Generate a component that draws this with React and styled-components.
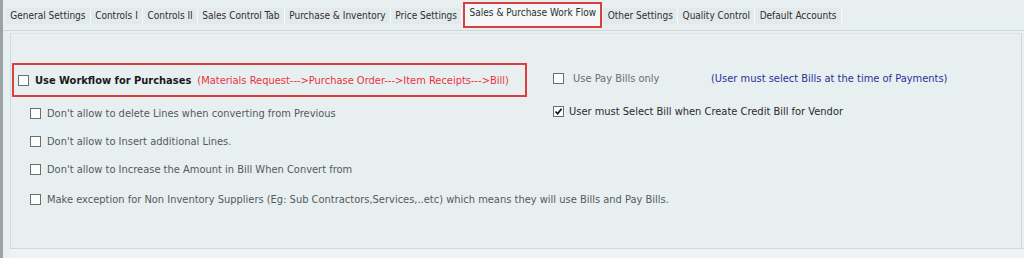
import React from 'react';
import styled, {createGlobalStyle} from 'styled-components';

const tabs= [
    "General Settings", "Controls I", "Controls II", "Sales Control Tab",
    "Purchase & Inventory", "Price Settings", "Sales & Purchase Work Flow",
    "Other Settings", "Quality Control", "Default Accounts"
];

const subOptions= [
    "Don't allow to delete Lines when converting from Previous",
    "Don't allow to Insert additional Lines.",
    "Don't allow to Increase the Amount in Bill When Convert from",
];

const Box= ({checked})=> (
    <CheckBox>
        {checked && (
            <svg width="9" height="9" viewBox="0 0 9 9">
                <path d="M1.5 4.5 L3.6 6.8 L7.6 1.8" fill="none" stroke="#111" strokeWidth="1.7"/>
            </svg>
        )}
    </CheckBox>
);

const App= ()=> {
    return (
        <Window>
            <GlobalStyle/>
            <TabBar>
                {tabs.map((t, i)=> (
                    <Tab key= {t} active= {i === 6}>{t}</Tab>
                ))}
            </TabBar>
            <Panel>
                <Columns>
                    <LeftColumn>
                        <HighlightBox>
                            <Box/>
                            <BoldLabel>Use Workflow for Purchases</BoldLabel>
                            <FlowNote>(Materials Request---&gt;Purchase Order---&gt;Item Receipts---&gt;Bill)</FlowNote>
                        </HighlightBox>
                        {subOptions.map((s)=> (
                            <SubOption key= {s}>
                                <Box/>
                                <Label>{s}</Label>
                            </SubOption>
                        ))}
                        <SubOption wide>
                            <Box/>
                            <Label>Make exception for Non Inventory Suppliers (Eg: Sub Contractors,Services,..etc) which means they will use Bills and Pay Bills.</Label>
                        </SubOption>
                    </LeftColumn>
                    <RightColumn>
                        <PayRow>
                            <Box/>
                            <PayLabel>Use Pay Bills only</PayLabel>
                            <BlueNote>(User must select Bills at the time of Payments)</BlueNote>
                        </PayRow>
                        <CreditRow>
                            <Box checked/>
                            <DarkLabel>User must Select Bill when Create Credit Bill for Vendor</DarkLabel>
                        </CreditRow>
                    </RightColumn>
                </Columns>
            </Panel>
            <Footer/>
        </Window>
    )
}

const GlobalStyle= createGlobalStyle`
    html, body {
        margin: 0;
        padding: 0;
        background-color: #e8eff0;
        font-family: "DejaVu Sans Condensed", "DejaVu Sans", sans-serif;
        font-size: 11px;
    }
`;
const Window= styled.div`
    width: 1024px;
    height: 258px;
    box-sizing: border-box;
    border-left: 3px solid #9ca3a5;
    background-color: #e8eff0;
    display: flex;
    flex-direction: column;
    overflow: hidden;
`;
const TabBar= styled.div`
    height: 31px;
    box-sizing: border-box;
    padding-left: 3px;
    display: flex;
    flex-direction: row;
    align-items: center;
    border-bottom: 1px solid #cdd6d8;
`;
const Tab= styled.div`
    height: ${p=> p.active? "26px": "16px"};
    box-sizing: border-box;
    padding: 0 4.3px;
    display: flex;
    align-items: center;
    margin-top: ${p=> p.active? "0": "1px"};
    margin-left: ${p=> p.active? "1px": "0"};
    margin-right: ${p=> p.active? "1px": "0"};
    white-space: nowrap;
    color: #2e2e2e;
    font-size: 10px;
    background-color: ${p=> p.active? "#f3f7f8": "#e3eaeb"};
    border: ${p=> p.active? "2px solid #d9403f": "none"};
    border-right: ${p=> p.active? "2px solid #d9403f": "1px solid #f6fafa"};
    padding-bottom: ${p=> p.active? "5px": "0"};
`;
const Panel= styled.div`
    flex: 1;
    margin: 2px 2px 0 7px;
    border-left: 1px solid #d2dadc;
    border-right: 1px solid #cfd7d9;
    border-top: 1px solid #dde4e5;
`;
const Columns= styled.div`
    display: flex;
    flex-direction: row;
`;
const LeftColumn= styled.div`
    width: 541px;
    padding-left: 1px;
    padding-top: 29px;
    display: flex;
    flex-direction: column;
`;
const RightColumn= styled.div`
    padding-top: 37px;
    display: flex;
    flex-direction: column;
`;
const HighlightBox= styled.div`
    width: 515px;
    height: 34px;
    box-sizing: border-box;
    border: 2px solid #dd3f3f;
    display: flex;
    align-items: center;
    padding-left: 4px;
    margin-bottom: 2px;
    white-space: nowrap;
`;
const CheckBox= styled.span`
    width: 9px;
    height: 9px;
    border: 1px solid #6b6f70;
    background-color: #fbfdfd;
    display: inline-flex;
    align-items: center;
    justify-content: center;
    flex-shrink: 0;
    margin-right: 6px;
`;
const BoldLabel= styled.span`
    font-weight: bold;
    font-size: 11px;
    color: #1a1a1a;
    margin-right: 6px;
`;
const FlowNote= styled.span`
    color: #e8323f;
    font-size: 11px;
`;
const SubOption= styled.div`
    height: 28px;
    display: flex;
    align-items: center;
    padding-left: 18px;
    margin-top: ${p=> p.wide? "2px": "0"};
`;
const Label= styled.span`
    color: #555a5c;
    white-space: nowrap;
`;
const PayRow= styled.div`
    display: flex;
    align-items: center;
    height: 14px;
`;
const PayLabel= styled.span`
    color: #6a6e70;
    margin-left: 3px;
    width: 138px;
`;
const BlueNote= styled.span`
    color: #2b2f9a;
`;
const CreditRow= styled.div`
    display: flex;
    align-items: center;
    height: 14px;
    margin-top: 19px;
`;
const DarkLabel= styled.span`
    color: #2a2a2a;
    margin-left: -1px;
`;
const Footer= styled.div`
    height: 9px;
    margin-left: 7px;
    border-top: 1px solid #cfd7d9;
    background-color: #eef3f4;
`;

export default App
